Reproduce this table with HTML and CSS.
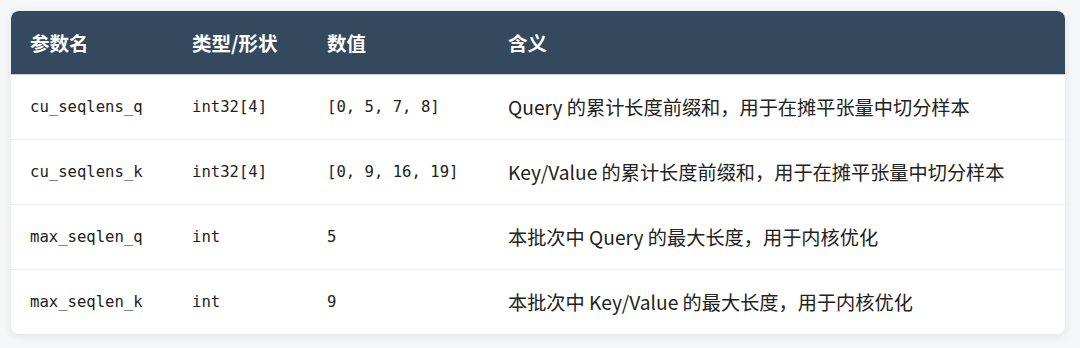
FILE: index.html
```html
<!DOCTYPE html>
<html lang="zh">
<head>
<meta charset="utf-8">
<link rel="stylesheet" href="styles.css">
</head>
<body>
<div class="card">
  <table class="params">
    <colgroup>
      <col class="c1"><col class="c2"><col class="c3"><col class="c4">
    </colgroup>
    <thead>
      <tr><th>参数名</th><th>类型/形状</th><th>数值</th><th>含义</th></tr>
    </thead>
    <tbody>
      <tr><td class="mono">cu_seqlens_q</td><td class="mono">int32[4]</td><td class="mono">[0, 5, 7, 8]</td><td class="desc">Query 的累计长度前缀和，用于在摊平张量中切分样本</td></tr>
      <tr><td class="mono">cu_seqlens_k</td><td class="mono">int32[4]</td><td class="mono">[0, 9, 16, 19]</td><td class="desc">Key/Value 的累计长度前缀和，用于在摊平张量中切分样本</td></tr>
      <tr><td class="mono">max_seqlen_q</td><td class="mono">int</td><td class="mono">5</td><td class="desc">本批次中 Query 的最大长度，用于内核优化</td></tr>
      <tr><td class="mono">max_seqlen_k</td><td class="mono">int</td><td class="mono">9</td><td class="desc">本批次中 Key/Value 的最大长度，用于内核优化</td></tr>
    </tbody>
  </table>
</div>
</body>
</html>
```

FILE: styles.css
```css
html, body {
  margin: 0;
  padding: 0;
  background: #f5f6f8;
}
body {
  padding: 11px 15px 14px 11px;
}
.card {
  width: 1054px;
  background: #ffffff;
  border-radius: 8px;
  overflow: hidden;
  box-shadow: 0 2px 8px rgba(0, 0, 0, 0.08);
}
.params {
  width: 100%;
  border-collapse: collapse;
  table-layout: fixed;
}
.c1 { width: 162px; }
.c2 { width: 135px; }
.c3 { width: 181px; }
.c4 { width: auto; }
th {
  background: #34495e;
  color: #ffffff;
  font-family: "Noto Sans CJK SC", sans-serif;
  font-weight: 700;
  font-size: 19.5px;
  text-align: left;
  height: 63px;
  padding: 0 0 0 19px;
  box-sizing: border-box;
  border-bottom: 1px solid #c9d0d8;
}
td {
  height: 65px;
  padding: 0 0 0 19px;
  box-sizing: border-box;
  border-top: 1px solid #eceef1;
  color: #222222;
  white-space: nowrap;
}
tbody tr:first-child td {
  border-top: none;
}
.mono {
  font-family: "DejaVu Sans Mono", monospace;
  font-size: 15.6px;
}
.desc {
  font-family: "Noto Sans CJK SC", sans-serif;
  font-size: 19.2px;
}
```
